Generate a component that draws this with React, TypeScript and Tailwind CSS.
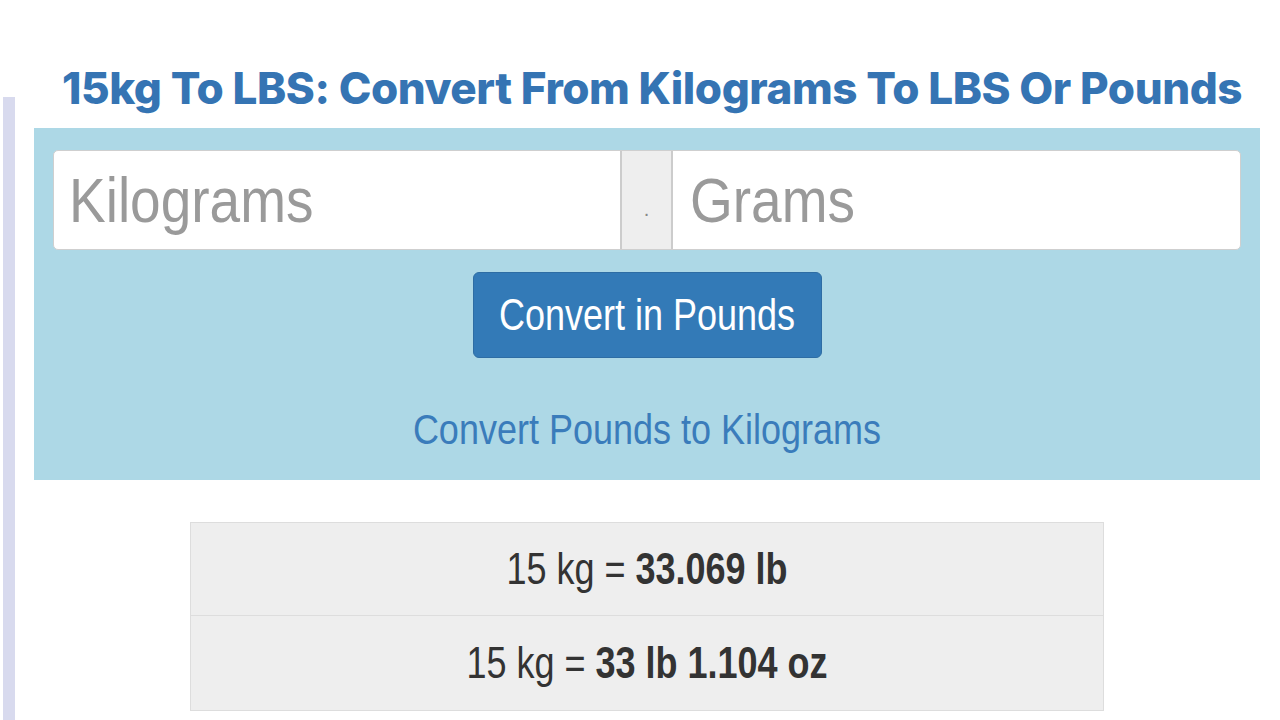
export default function App() {
  return (
    <div className="flex w-[1280px] h-[720px] overflow-hidden bg-white">
      {/* side rule */}
      <div className="ml-[3px] mt-[97px] w-[12px] bg-[#d8daee]" />

      <div className="ml-[19px] flex w-[1226px] flex-col">
        <h1
          className="pl-[10px] pt-[60px] whitespace-nowrap text-center text-[44px] leading-[56px] font-extrabold tracking-[-0.01em] text-[#3574b3]"
          style={{ fontFamily: "Inter, 'Open Sans', sans-serif" }}
        >
          15kg To LBS: Convert From Kilograms To LBS Or Pounds
        </h1>

        {/* converter panel */}
        <div
          className="mt-[12px] flex h-[352px] flex-col items-center bg-[#add8e6] px-[19px] pt-[22px]"
          style={{ fontFamily: "'Liberation Sans', Arial, sans-serif" }}
        >
          <div className="flex h-[100px] w-full rounded-[5px] border border-[#cfcfcf] bg-white">
            <div className="flex w-[566px] items-center pl-[15px]">
              <span className="inline-block scale-y-[1.15] text-[55px] text-[#9a9a9a]">Kilograms</span>
            </div>
            <div className="flex w-[53px] items-center justify-center border-x-2 border-[#cccccc] bg-[#eeeeee]">
              <span className="mt-[18px] text-[20px] text-[#888]">.</span>
            </div>
            <div className="flex flex-1 items-center pl-[17px]">
              <span className="inline-block scale-y-[1.15] text-[55px] text-[#9a9a9a]">Grams</span>
            </div>
          </div>

          <button className="mt-[22px] flex h-[86px] w-[349px] items-center justify-center rounded-[6px] border border-[#2e6da4] bg-[#337ab7]">
            <span className="inline-block scale-y-[1.25] text-[36px] text-white">Convert in Pounds</span>
          </button>

          <a href="#" className="mt-[48px] flex h-[48px] items-center">
            <span className="inline-block scale-y-[1.2] text-[36px] text-[#3a7cbb]">Convert Pounds to Kilograms</span>
          </a>
        </div>

        {/* results */}
        <div
          className="mx-auto mt-[42px] w-[914px] border border-[#dddddd] bg-[#eeeeee] text-[#333]"
          style={{ fontFamily: "'Liberation Sans', Arial, sans-serif" }}
        >
          <div className="flex h-[93px] items-center justify-center border-b border-[#dddddd]">
            <span className="inline-block scale-y-[1.25] text-[36px]">
              15 kg = <b>33.069 lb</b>
            </span>
          </div>
          <div className="flex h-[94px] items-center justify-center">
            <span className="inline-block scale-y-[1.25] text-[36px]">
              15 kg = <b>33 lb 1.104 oz</b>
            </span>
          </div>
        </div>
      </div>
    </div>
  );
}
